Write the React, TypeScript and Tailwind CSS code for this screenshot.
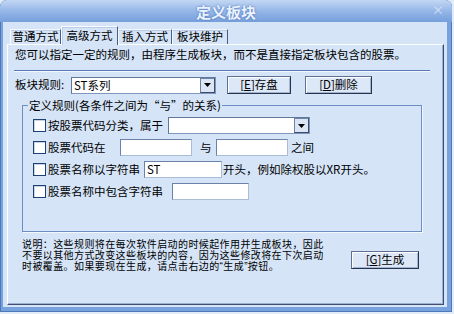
import React from 'react';

const Arrow = () => (
  <svg width="7" height="4" viewBox="0 0 7 4">
    <path d="M0 0h7L3.5 4z" fill="#000" />
  </svg>
);

const Check = () => (
  <span className="w-[13px] h-[13px] shrink-0 bg-white border border-[#1d4170] shadow-[inset_1px_1px_0_#c8d4e4]" />
);

const Field = ({ w, value }: { w: string; value?: string }) => (
  <div
    className={`${w} h-[17px] shrink-0 bg-white border border-[#a9bcd8] border-t-[#6a82a6] border-l-[#6a82a6] text-[11.5px] leading-[15px] pl-[2px] text-black`}
  >
    {value}
  </div>
);

const Combo = ({ w, value }: { w: string; value?: string }) => (
  <div className={`${w} h-[17px] shrink-0 flex bg-white border border-[#7f97bd] border-t-[#5f789e] border-l-[#5f789e]`}>
    <span className="flex-1 text-[11.5px] leading-[15px] pl-[2px] text-black">{value}</span>
    <span className="w-[15px] h-[15px] flex items-center justify-center bg-[#dbe5f3] border border-[#6e84a8] border-b-[#3c4d6a] border-r-[#3c4d6a]">
      <Arrow />
    </span>
  </div>
);

const Btn = ({ k, label, w }: { k: string; label: string; w: string }) => (
  <button
    className={`${w} h-[18px] shrink-0 flex items-center justify-center bg-[#dce7f7] border border-[#5d7091] border-b-[#26344d] border-r-[#26344d] shadow-[inset_1px_1px_0_#ffffff,inset_-1px_-1px_0_#a3b4cf] text-[11.5px] leading-none text-black`}
  >
    [<span className="underline">{k}</span>]{label}
  </button>
);

const tabs = [
  { name: '普通方式', w: 'w-[51px]' },
  { name: '高级方式', w: 'w-[57px]', active: true },
  { name: '插入方式', w: 'w-[54px]' },
  { name: '板块维护', w: 'w-[56px]' },
];

export default function App() {
  return (
    <div className="w-[454px] h-[314px] bg-[#e2ecf9] font-['Noto_Sans_CJK_SC',sans-serif] text-black">
      <div className="w-[452px] h-[312px] flex flex-col bg-[#78a2dd] rounded-t-[7px] shadow-[inset_0_0_0_1px_#4f78b8]">
        {/* title bar */}
        <div className="h-[22px] shrink-0 flex items-center relative rounded-t-[7px] bg-gradient-to-b from-[#c3d7f3] via-[#96b7e8] to-[#769fdc]">
          <span className="flex-1 text-center text-[15px] font-bold leading-none text-[#eaf2ff] [text-shadow:0_0_2px_#3d66a8]">
            定义板块
          </span>
          <span className="absolute right-[8px] top-[4px] text-[12px] leading-none text-[#d6e3f5]">×</span>
        </div>

        {/* body */}
        <div className="flex-1 ml-[3px] mr-[5px] mb-[5px] bg-[#d5e4f7] flex flex-col">
          {/* tabs */}
          <div className="h-[22px] shrink-0 flex items-end pl-[7px]">
            {tabs.map((t) =>
              t.active ? (
                <div
                  key={t.name}
                  className={`${t.w} h-[19px] -mb-[1px] relative z-10 flex items-center justify-center bg-[#d5e4f7] border border-b-0 border-[#fdfeff] border-r-[#4a5d80] shadow-[inset_1px_1px_0_#b8cce9] text-[11.5px] leading-none`}
                >
                  {t.name}
                </div>
              ) : (
                <div
                  key={t.name}
                  className={`${t.w} h-[15px] flex items-center justify-center bg-[#d5e4f7] border border-b-0 border-[#f4f8fe] border-r-[#4a5d80] shadow-[inset_0_1px_0_#b8cce9] text-[11.5px] leading-none`}
                >
                  {t.name}
                </div>
              )
            )}
          </div>

          {/* tab panel */}
          <div className="h-[261px] ml-[4px] mr-[3px] flex flex-col bg-[#d5e4f7] border border-[#fdfeff] border-r-[#3d4d6b] border-b-[#3d4d6b] shadow-[inset_-1px_-1px_0_#9cb0cf]">
            <p className="mt-[2px] ml-[7px] text-[11.5px] leading-[14px]">
              您可以指定一定的规则，由程序生成板块，而不是直接指定板块包含的股票。
            </p>
            <div className="mt-[9px] ml-[6px] w-[416px] h-[2px] border-t border-[#5878b8] border-b border-b-[#f2f7fd]" />

            <div className="mt-[4px] ml-[7px] flex items-center h-[18px]">
              <span className="w-[56px] text-[11.5px] leading-none">板块规则:</span>
              <Combo w="w-[145px]" value="ST系列" />
              <span className="w-[11px]" />
              <Btn k="E" label="存盘" w="w-[64px]" />
              <span className="w-[14px]" />
              <Btn k="D" label="删除" w="w-[67px]" />
            </div>

            <fieldset className="mt-[4px] ml-[14px] w-[400px] h-[134px] border border-[#6d8dc4] shadow-[1px_1px_0_#f2f7fd] px-0">
              <legend className="ml-[5px] px-[1px] text-[11.5px] leading-[14px]">
                定义规则(各条件之间为“与”的关系)
              </legend>
              <div className="mt-[5px] pl-[10px] flex flex-col gap-[5px]">
                <div className="flex items-center h-[17px]">
                  <Check />
                  <span className="ml-[2px] w-[120px] text-[11.5px] leading-none">按股票代码分类，属于</span>
                  <Combo w="w-[142px]" />
                </div>
                <div className="flex items-center h-[17px]">
                  <Check />
                  <span className="ml-[2px] w-[72px] text-[11.5px] leading-none">股票代码在</span>
                  <Field w="w-[72px]" />
                  <span className="w-[24px] pl-[8px] text-[11.5px] leading-none">与</span>
                  <Field w="w-[72px]" />
                  <span className="ml-[3px] text-[11.5px] leading-none">之间</span>
                </div>
                <div className="flex items-center h-[17px]">
                  <Check />
                  <span className="ml-[2px] w-[96px] text-[11.5px] leading-none">股票名称以字符串</span>
                  <Field w="w-[78px]" value="ST" />
                  <span className="ml-[1px] text-[11.5px] leading-none">开头，例如除权股以XR开头。</span>
                </div>
                <div className="flex items-center h-[17px]">
                  <Check />
                  <span className="ml-[2px] w-[124px] text-[11.5px] leading-none">股票名称中包含字符串</span>
                  <Field w="w-[77px]" />
                </div>
              </div>
            </fieldset>

            <div className="mt-[7px] ml-[14px] flex">
              <div className="w-[329px] font-['Liberation_Sans','Noto_Sans_CJK_SC',sans-serif] text-[10px] leading-[11.2px] tracking-[0.4px]">
                <div>说明：这些规则将在每次软件启动的时候起作用并生成板块，因此</div>
                <div>不要以其他方式改变这些板块的内容，因为这些修改将在下次启动</div>
                <div>时被覆盖。如果要现在生成，请点击右边的“生成”按钮。</div>
              </div>
              <div className="mt-[12px]">
                <Btn k="G" label="生成" w="w-[68px]" />
              </div>
            </div>
          </div>
        </div>
      </div>
    </div>
  );
}
